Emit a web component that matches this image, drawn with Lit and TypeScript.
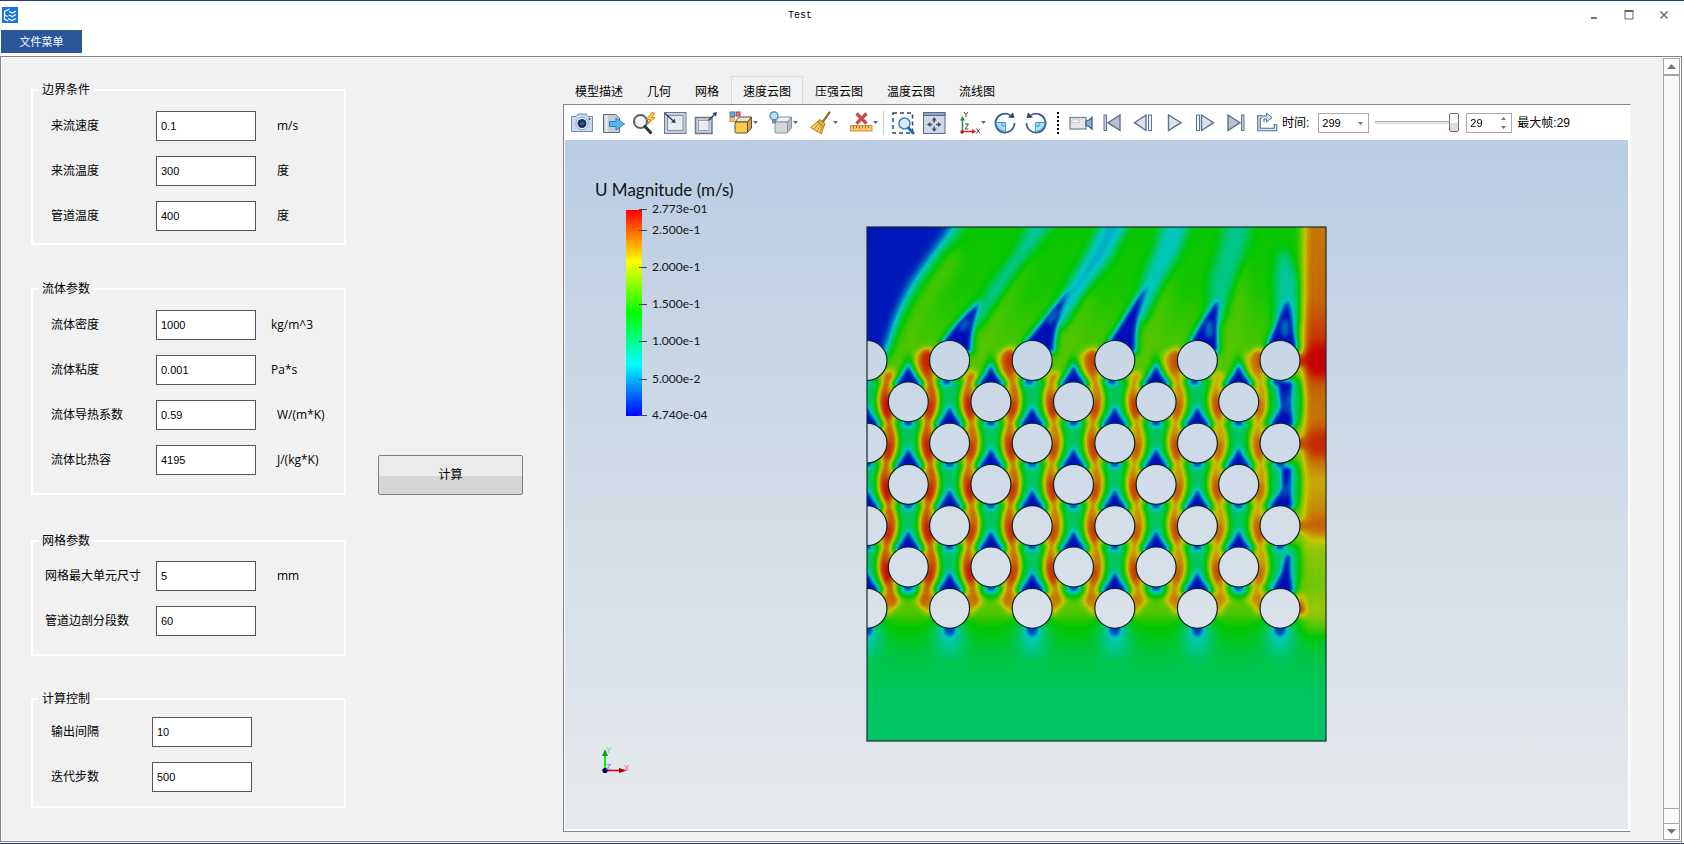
import { LitElement, html, css, svg, nothing } from "lit";
import { customElement, property } from "lit/decorators.js";

/* ---------- toolbar glyphs, all on a 24 x 24 grid ---------- */
const NAVY = "#24406e";
const STEEL = "#5a7396";
const PALE = "#dde1e8";

const cube = (front: string, top: string, side: string, line: string) => svg`
  <path d="M6 11 L10 6 H22.500 L18.500 11 Z" fill=${top} stroke=${line} />
  <path d="M18.500 11 L22.500 6 V17 L18.500 21.500 Z" fill=${side} stroke=${line} />
  <rect x="6" y="11" width="12.500" height="11" rx="1" fill=${front} stroke=${line} />`;

const ICONS: Record<string, unknown> = {
  camera: svg`
    <path d="M1.500 5.500 H6 L8 3 H16 L18 5.500 H22.500 V20.500 H1.500 Z" fill="#c9d8ec" stroke="#6b8cb8" stroke-linejoin="round"/>
    <circle cx="12" cy="12.500" r="6.200" fill="#eef3fa" stroke="#8fa9cb"/>
    <circle cx="12" cy="12.500" r="4.500" fill="#17335f"/><circle cx="12" cy="12.500" r="2" fill="#34588f"/>
    <circle cx="19.500" cy="8" r="1" fill="#34588f"/>`,
  export: svg`
    <path d="M2.500 3.500 H14.500 L18.500 7 V21.500 H2.500 Z" fill="#c7ccd4" stroke="#5f6b7b"/>
    <path d="M5.500 4 V21" stroke="#eef0f4" stroke-width="2"/>
    <path d="M8.500 10.500 H15 V7 L23.500 13 L15 19 V15.500 H8.500 Z" fill="#55b6ea" stroke="#2b84c0"/>`,
  inspect: svg`
    <circle cx="8.500" cy="10.500" r="6.500" fill="#f3f5f8" stroke="#5c6066" stroke-width="2"/>
    <path d="M13 15.500 L18.500 21.500" stroke="#33363b" stroke-width="3.200" stroke-linecap="round"/>
    <path d="M20 1.500 L14.500 8.500 H18 L15.500 13.500 L23 6.500 H19.500 L22.500 2 Z" fill="#ffd24a" stroke="#e57b1e"/>`,
  shrink: svg`
    <rect x="1.500" y="1.500" width="21.500" height="21" fill="#c9cfd9" stroke="#6a7a92"/>
    <rect x="4.500" y="4.500" width="15.500" height="15" fill="#e9ebee" stroke="#8492a8"/>
    <path d="M2 2.500 L11 10.500" stroke=${NAVY} stroke-width="1.500"/><path d="M12.500 12 L8 11.500 L12 7.500 Z" fill=${NAVY}/>`,
  grow: svg`
    <rect x="1.500" y="6.500" width="16.500" height="16" fill="#c9cfd9" stroke="#6a7a92" stroke-width="1.500"/>
    <rect x="4.500" y="9.500" width="10.500" height="10" fill="#e9ebee" stroke="#97a2b3"/>
    <path d="M14.500 9.500 L21 3" stroke=${NAVY} stroke-width="1.500"/><path d="M23 1 L18.500 2 L22 5.500 Z" fill=${NAVY}/>`,
  colorcube: svg`
    ${cube("#ffc94e", "#f0e6d0", "#d6a13a", "#5b5140")}
    <rect x="1" y="1" width="4.500" height="4.500" fill="#5fb7e6" stroke="#2b84c0"/>
    <rect x="7" y="1" width="4" height="4" fill="#e07a74" stroke="#b8413a"/>
    <rect x="1" y="6.500" width="4" height="4" fill="#ffc267" stroke="#dc8b22"/>`,
  lightcube: svg`
    ${cube("#d3d7dc", "#eceef0", "#b3bac3", "#8a929e")}
    <circle cx="5" cy="4.800" r="4" fill="#bfe2f7" stroke="#3f8fc8" stroke-width="1.300"/>
    <path d="M3.500 9 H6.500 V12 H3.500 Z" fill="#8fa0b4" stroke="#5b7596" stroke-width=".8"/>`,
  broom: svg`
    <path d="M20.500 1.500 L14 10.500" stroke="#9a6a35" stroke-width="2.200" stroke-linecap="round"/>
    <path d="M11 8.500 L16 12.500 L14.500 16 L8 11 Z" fill="#e9a93c" stroke="#a8701f"/>
    <path d="M8 11 L14.500 16 L12.500 23 L1.500 16.500 Z" fill="#ffd260" stroke="#b27d25" stroke-linejoin="round"/>
    <path d="M9.500 13 L5 18 M11.500 14.500 L8 20 M13 16 L11 21.500" stroke="#b27d25"/>`,
  ruler: svg`
    <path d="M7.500 2.500 L17.500 12.500 M17.500 2.500 L7.500 12.500" stroke="#c44b4b" stroke-width="3.200"/>
    <rect x="1.500" y="14.500" width="21.500" height="5.500" fill="#fbc768" stroke="#d1913a"/>
    <path d="M4.500 15 V17.500 M7.500 15 V17 M10.500 15 V17.500 M13.500 15 V17 M16.500 15 V17.500 M19.500 15 V17" stroke="#a06a22"/>`,
  zoombox: svg`
    <rect x="2" y="2" width="19.500" height="20" fill="none" stroke="#2c4674" stroke-width="1.500" stroke-dasharray="4 3"/>
    <circle cx="13.500" cy="12.500" r="5.500" fill="#d8effb" stroke="#3a86b8" stroke-width="1.500"/>
    <path d="M17.500 17 L22 22" stroke="#1f6fb0" stroke-width="3" stroke-linecap="round"/>`,
  fit: svg`
    <rect x="1.500" y="1.500" width="21.500" height="21" fill="#d3d9e4" stroke="#54688c"/>
    <rect x="1.500" y="1.500" width="21.500" height="3" fill="#8fa3c4" stroke="#54688c"/>
    <path d="M12.200 6 L14.700 9.500 H9.700 Z M12.200 21 L14.700 17.500 H9.700 Z M5 13.500 L8.500 11 V16 Z M19.500 13.500 L16 11 V16 Z" fill="#3b4c6c"/>
    <path d="M12.200 9 V11.500 M12.200 15.500 V18 M8 13.500 H10.300 M14.100 13.500 H16.500" stroke="#3b4c6c" stroke-width="1.500"/>`,
  axes: svg`
    <path d="M5.500 21 V8" stroke="#2e8b3d" stroke-width="1.500"/><path d="M5.500 5 L3 9.500 H8 Z" fill="#2e8b3d"/>
    <path d="M5 20.500 H16" stroke="#e02020" stroke-width="1.500"/><path d="M19 20.500 L15 18 V23 Z" fill="#e02020"/>
    <rect x="3.500" y="19.500" width="3" height="3" fill="#a01818"/>
    <path d="M7 1 L9 3.500 V6 M11 1 L9 3.500 M8 13 H11.500 L8 18 H11.500 M19.500 17.500 L23 22.500 M23 17.500 L19.500 22.500" fill="none" stroke="#444"/>`,
  rotcw: svg`
    <path d="M21.500 12 A9.500 9.500 0 1 1 17 4" fill="none" stroke="#3e5c8c" stroke-width="1.800"/>
    <path d="M21.500 7 L15 6.500 L20 1.500 Z" fill=${NAVY}/>
    <path d="M3 11.500 H12.500 V20.500 A9.500 9.500 0 0 1 3 11.500 Z" fill="#a9def8" stroke="#3a9fd8"/><path d="M9 11.500 V15 H12.500" fill="none" stroke="#3a9fd8"/>`,
  rotccw: svg`
    <path d="M2.500 12 A9.500 9.500 0 1 0 7 4" fill="none" stroke="#3e5c8c" stroke-width="1.800"/>
    <path d="M2.500 7 L9 6.500 L4 1.500 Z" fill=${NAVY}/>
    <path d="M21 11.500 H11.500 V20.500 A9.500 9.500 0 0 0 21 11.500 Z" fill="#a9def8" stroke="#3a9fd8"/><path d="M15 11.500 V15 H11.500" fill="none" stroke="#3a9fd8"/>`,
  record: svg`
    <rect x="1" y="6.500" width="16" height="11.500" fill="#e6e6e8" stroke="#7b8496" stroke-width="1.300"/>
    <rect x="3" y="9" width="7" height="2.500" fill="#fff" stroke="#a9afba" stroke-width=".6"/>
    <path d="M17 10 L20 9 L23 6.500 V18 L20 15.500 L17 14.500 Z" fill="#7fb8dc" stroke="#3f5f8d" stroke-width="1.300"/>`,
  first: svg`
    <rect x="4" y="4" width="2.500" height="15.500" fill="#c9d0db" stroke=${STEEL}/>
    <path d="M20 4 V19.500 L8 11.700 Z" fill="#b9c0cb" stroke=${STEEL} stroke-width="1.400"/>`,
  prev: svg`
    <rect x="17.500" y="4" width="3" height="15.500" fill="#eef1f6" stroke=${STEEL}/>
    <path d="M15 4 V19.500 L3.500 11.700 Z" fill=${PALE} stroke=${STEEL} stroke-width="1.400"/>`,
  play: svg`<path d="M6.500 4 V19.500 L19 11.700 Z" fill=${PALE} stroke=${STEEL} stroke-width="1.400"/>`,
  next: svg`
    <rect x="3.500" y="4" width="3" height="15.500" fill="#eef1f6" stroke=${STEEL}/>
    <path d="M8.500 4 V19.500 L20.500 11.700 Z" fill=${PALE} stroke=${STEEL} stroke-width="1.400"/>`,
  last: svg`
    <path d="M4 4 V19.500 L16 11.700 Z" fill="#b9c0cb" stroke=${STEEL} stroke-width="1.400"/>
    <rect x="17.500" y="4" width="2.500" height="15.500" fill="#c9d0db" stroke=${STEEL}/>`,
  loop: svg`
    <path d="M7 6 H4 V18.500 H20.500 V13" fill="none" stroke="#4d7099" stroke-width="3.600"/>
    <path d="M7 6 H4 V18.500 H20.500 V13.500" fill="none" stroke="#dbe7f3" stroke-width="1.400"/>
    <path d="M6 5 H11.500 V2 L17 6.500 L11.500 11 V8 H9 V11" fill="#cfe0f0" stroke="#4d7099"/>`,
};

@customElement("tool-button")
class ToolButton extends LitElement {
  @property() icon = "";
  @property() label = "";
  @property({ type: Boolean }) menu = false;

  static styles = css`
    :host { display: block; flex: none; }
    button {
      display: flex; align-items: center; justify-content: center;
      width: 31px; height: 32px; padding: 0; border: 0; background: none;
    }
    button.menu { width: 40px; justify-content: flex-end; padding-right: 3px; }
    svg { display: block; flex: none; }
  `;

  render() {
    return html`<button class=${this.menu ? "menu" : ""} aria-label=${this.label}>
      <svg width="24" height="24" viewBox="0 0 24 24" fill="none">${ICONS[this.icon]}</svg>
      ${this.menu ? html`<svg width="5" height="3" viewBox="0 0 5 3"><path d="M0 0H5L2.500 3Z" fill="#666" /></svg>` : nothing}
    </button>`;
  }
}

/* ---------- velocity field ---------- */
const PITCH = 82.6;
const HALF = 41.3;
const ROW0 = 133.5;
const R = 20;

/* scalar 0..1 as a grey level; the #jet filter turns it into a colour */
const lvl = (v: number) => {
  const n = Math.round(v * 255);
  return `rgb(${n},${n},${n})`;
};

interface Tube { x: number; y: number; row: number; col: number; }
const TUBES: Tube[] = [];
for (let row = 0; row < 7; row++) {
  const odd = row % 2 === 1;
  for (let col = 0; col < (odd ? 5 : 6); col++) {
    TUBES.push({ x: col * PITCH + (odd ? HALF : 0), y: ROW0 + row * HALF, row, col });
  }
}

const streamPath = (cx: number, side: number, from: number) => {
  const pts: string[] = [];
  for (let y = from; y <= 378; y += 3) {
    const x = cx + side * (20.65 + 5.5 * Math.cos((Math.PI * (y - ROW0)) / HALF));
    pts.push(`${x.toFixed(1)} ${y}`);
  }
  return "M" + pts.join(" L");
};

const STREAMS = [0, 1, 2, 3, 4].flatMap((k) => [
  { k, d: streamPath(k * PITCH, 1, 148) },
  { k, d: streamPath((k + 1) * PITCH, -1, 127) },
]);

/* wakes behind the top row, and the slow plumes that trail from them */
const WAKES = [
  { d: "M74 118 L104 126 C103 108 107 88 115 72 C102 84 88 98 74 118 Z", p: "M106 96 L122 60 L148 24 L170 -16 L196 -16 L160 30 L132 70 L112 100 Z", v: 0.3 },
  { d: "M156 118 L187 126 C186 104 194 78 206 58 C190 76 176 96 156 118 Z", p: "M188 96 L204 52 L226 14 L240 -16 L268 -16 L240 36 L214 70 L196 100 Z", v: 0.22 },
  { d: "M240 118 L269 126 C266 104 272 78 282 56 C266 76 256 96 240 118 Z", p: "M268 90 L278 46 L292 10 L300 -16 L328 -16 L310 30 L290 66 L276 96 Z", v: 0.26 },
  { d: "M322 118 L351 126 C349 104 350 88 352 72 C340 86 334 98 322 118 Z", p: "M342 90 L342 54 L354 16 L360 -16 L388 -16 L378 24 L364 64 L354 96 Z", v: 0.33 },
  { d: "M400 118 L430 124 C427 106 424 88 421 72 C414 86 410 98 400 118 Z", p: "M408 96 L408 50 L412 24 L420 24 L432 54 L432 100 Z", v: 0.3 },
];

const field = () => svg`
  <defs>
    <filter id="jet" x="0" y="0" width="1" height="1" color-interpolation-filters="sRGB">
      <feComponentTransfer>
        <feFuncR type="table" tableValues="0 0 0 0.780 0.780"/>
        <feFuncG type="table" tableValues="0 0.780 0.780 0.780 0"/>
        <feFuncB type="table" tableValues="0.720 0.780 0 0 0"/>
      </feComponentTransfer>
    </filter>
    ${[1, 2, 3, 5, 8].map(
      (s) => svg`<filter id="b${s}" filterUnits="userSpaceOnUse" x="-60" y="-60" width="580" height="640" color-interpolation-filters="sRGB"><feGaussianBlur stdDeviation=${s}/></filter>`
    )}
    <clipPath id="frame"><rect width="459" height="514"/></clipPath>
    <linearGradient id="base" gradientUnits="userSpaceOnUse" x1="0" y1="0" x2="0" y2="514">
      <stop offset="0" stop-color=${lvl(0.51)}/><stop offset=".13" stop-color=${lvl(0.53)}/>
      <stop offset=".21" stop-color=${lvl(0.58)}/><stop offset=".26" stop-color=${lvl(0.6)}/>
      <stop offset=".72" stop-color=${lvl(0.62)}/><stop offset=".75" stop-color=${lvl(0.6)}/>
      <stop offset=".78" stop-color=${lvl(0.5)}/><stop offset=".83" stop-color=${lvl(0.42)}/>
      <stop offset=".9" stop-color=${lvl(0.38)}/><stop offset="1" stop-color=${lvl(0.37)}/>
    </linearGradient>
    <linearGradient id="wall" gradientUnits="userSpaceOnUse" x1="0" y1="0" x2="0" y2="410">
      <stop offset="0" stop-color=${lvl(0.85)}/><stop offset=".18" stop-color=${lvl(0.87)}/>
      <stop offset=".32" stop-color=${lvl(0.97)}/><stop offset=".4" stop-color=${lvl(0.87)}/>
      <stop offset=".46" stop-color=${lvl(0.85)}/><stop offset=".53" stop-color=${lvl(0.92)}/>
      <stop offset=".62" stop-color=${lvl(0.78)}/><stop offset=".72" stop-color=${lvl(0.85)}/>
      <stop offset=".79" stop-color=${lvl(0.68)}/><stop offset=".87" stop-color=${lvl(0.64)}/>
      <stop offset=".94" stop-color=${lvl(0.7)}/><stop offset="1" stop-color=${lvl(0.52)}/>
    </linearGradient>
  </defs>
  <g clip-path="url(#frame)"><g filter="url(#jet)">
    <rect width="459" height="514" fill="url(#base)"/>
    <g filter="url(#b8)" fill="none">
      ${[0, 1, 2, 3, 4].map(
        (k) => svg`<path d="M${k * PITCH + 30} 140 C${k * PITCH + 34} 108 ${k * PITCH + 50} 80 ${k * PITCH + 88 - k * 14} 24" stroke=${lvl(0.61)} stroke-width="16"/>`
      )}
      <path d="M-40 -40 H110 L90 0 C72 26 54 48 46 62 C34 84 24 104 20 124 H-40 Z" fill=${lvl(0.12)}/>
      ${TUBES.filter((t) => t.row === 6).map((t) => svg`<ellipse cx=${t.x} cy="408" rx="14" ry="20" fill=${lvl(0.26)}/>`)}
    </g>
    <g filter="url(#b5)">${WAKES.map((w) => svg`<path d=${w.p} fill=${lvl(w.v)}/>`)}</g>
    <g filter="url(#b3)" fill="none">
      ${STREAMS.map((s) => svg`<path d=${s.d} stroke=${lvl(0.76)} stroke-width="19"/>`)}
    </g>
    <g filter="url(#b3)" fill="none" stroke-linecap="round">
      ${STREAMS.map((s) => svg`<path d=${s.d} stroke=${lvl(0.91 - s.k * 0.02)} stroke-width=${10 - s.k}/>`)}
    </g>
    <g filter="url(#b5)">
      <rect x="436" y="-30" width="60" height="438" fill="url(#wall)"/>
      <path d="M428 133 L446 118 H470 V150 H446 Z" fill=${lvl(1)}/>
      <path d="M428 216 L448 204 H470 V230 H448 Z" fill=${lvl(0.95)}/>
      <path d="M426 299 L446 290 H470 V308 H446 Z" fill=${lvl(0.88)}/>
    </g>
    <g filter="url(#b3)">
      ${TUBES.filter((t) => t.row < 6 && !(t.row === 0 && t.col === 0)).map((t) => {
        const hot = 1 - t.col * 0.02;
        return svg`
          <ellipse cx=${t.x - R - 1} cy=${t.y + (t.row ? 5 : 0)} rx="5" ry="13" fill=${lvl(hot)}/>
          ${t.row && t.x < 400 ? svg`<ellipse cx=${t.x + R + 1} cy=${t.y + 7} rx="5" ry="11" fill=${lvl(hot - 0.04)}/>` : nothing}`;
      })}
      ${TUBES.filter((t) => t.row === 6).map((t) => svg`
        <ellipse cx=${t.x - R - 1} cy=${t.y - 4} rx="4" ry="11" fill=${lvl(0.86)}/>
        <ellipse cx=${t.x + R + 1} cy=${t.y - 4} rx="4" ry="11" fill=${lvl(0.86)}/>`)}
      <ellipse cx="433" cy="134" rx="6" ry="5" fill=${lvl(0.98)}/>
      <ellipse cx="433" cy="217" rx="6" ry="5" fill=${lvl(0.94)}/>
      <ellipse cx="433" cy="299" rx="6" ry="5" fill=${lvl(0.9)}/>
      <ellipse cx="434" cy="383" rx="5" ry="6" fill=${lvl(0.94)}/>
    </g>
    <g filter="url(#b3)" fill=${lvl(0.38)}>
      ${TUBES.filter((t) => t.row > 1).map((t) => {
        const a = t.y - 64;
        const b = t.y - 17;
        const m = (a + b) / 2;
        return svg`<path d="M${t.x - 15} ${a} Q${t.x - 2} ${m} ${t.x - 19} ${b} H${t.x + 19} Q${t.x + 2} ${m} ${t.x + 15} ${a} Z"/>`;
      })}
      ${TUBES.filter((t) => t.row === 1).map((t) => svg`<path d="M${t.x} ${t.y - 50} Q${t.x - 4} ${t.y - 30} ${t.x - 19} ${t.y - 16} H${t.x + 19} Q${t.x + 4} ${t.y - 30} ${t.x} ${t.y - 50} Z"/>`)}
      ${TUBES.filter((t) => t.row === 5).map((t) => svg`<ellipse cx=${t.x} cy=${t.y + 22} rx="11" ry="9"/>`)}
      <path d="M402 152 H432 Q438 175 432 198 H402 Z M402 236 H431 Q436 256 431 280 H402 Z M404 318 H431 Q436 340 430 364 H402 Z"/>
    </g>
    <g filter="url(#b2)" fill=${lvl(0.02)}>
      ${TUBES.filter((t) => t.row > 0 && t.x < 400).map((t) => svg`<path d="M${t.x} ${t.y - 39} Q${t.x - 4} ${t.y - 26} ${t.x - 15} ${t.y - 16} H${t.x + 15} Q${t.x + 4} ${t.y - 26} ${t.x} ${t.y - 39} Z"/>`)}
      ${TUBES.map((t) => svg`<ellipse cx=${t.x - (t.row === 0 ? 3 : 0)} cy=${t.y + R + 1} rx="6" ry=${t.row === 6 ? 7 : 4} fill=${lvl(0.08)}/>`)}
    </g>
    <g filter="url(#b5)">
      <path d="M-30 -30 H94 L80 0 C62 26 46 48 38 62 C28 84 21 104 17 130 H-30 Z" fill=${lvl(0.03)}/>
    </g>
    <g filter="url(#b5)" fill=${lvl(0.16)}>${WAKES.map((w) => svg`<path d=${w.d}/>`)}</g>
    <g filter="url(#b2)" fill=${lvl(0.02)}>
      ${WAKES.map((w) => svg`<path d=${w.d}/>`)}
      <path d="M410 154 H426 L424 176 L427 200 H402 L414 180 Z M414 240 H425 L424 262 L426 282 H400 L415 262 Z M419 326 L424 328 L424 346 L427 366 H403 L414 346 Z"/>
    </g>
    <g filter="url(#b2)" fill=${lvl(0.14)}>
      <ellipse cx="98" cy="98" rx="3" ry="8" transform="rotate(38 98 98)"/>
      <ellipse cx="186" cy="90" rx="3" ry="9" transform="rotate(34 186 90)"/>
      <ellipse cx="342" cy="102" rx="4" ry="9"/><ellipse cx="418" cy="101" rx="4" ry="9"/>
      <ellipse cx="420" cy="176" rx="2" ry="12"/><ellipse cx="420" cy="262" rx="2" ry="10" transform="rotate(20 420 262)"/>
    </g>
  </g></g>
  <g clip-path="url(#frame)" fill="url(#sky)" stroke="#10202a" stroke-width="1.200">
    ${TUBES.map((t) => svg`<circle cx=${t.x} cy=${t.y} r=${R}/>`)}
  </g>
  <rect width="459" height="514" fill="none" stroke="#1d2b33" stroke-width="1.200"/>`;

const TICKS: [number, string][] = [
  [69, "2.773e-01"], [90, "2.500e-1"], [127, "2.000e-1"], [164, "1.500e-1"],
  [201, "1.000e-1"], [239, "5.000e-2"], [275, "4.740e-04"],
];

@customElement("field-view")
class FieldView extends LitElement {
  static styles = css`
    :host { display: block; min-height: 0; background: linear-gradient(#bacde4, #cfdbe7 48%, #e7eaed); }
    svg { display: block; width: 100%; height: 100%; }
    text { font-family: Lato, "Open Sans", sans-serif; fill: #101418; }
    .title { font-size: 17px; }
    .tick { font-size: 12px; }
    .axis { font-size: 8px; }
    .ax { fill: #ee6a6a; }
    .ay { fill: #5fd86f; }
    .az { fill: #6a6af0; }
  `;

  render() {
    return html`<svg viewBox="0 0 1063 689" preserveAspectRatio="xMidYMid meet" role="img" aria-label="U Magnitude">
      <defs>
        <linearGradient id="bar" x1="0" y1="0" x2="0" y2="1">
          <stop offset="0" stop-color="#f00" /><stop offset=".25" stop-color="#ff0" /><stop offset=".5" stop-color="#0f0" />
          <stop offset=".75" stop-color="#0ff" /><stop offset="1" stop-color="#00f" />
        </linearGradient>
        <linearGradient id="sky" gradientUnits="userSpaceOnUse" x1="0" y1="-87" x2="0" y2="602">
          <stop offset="0" stop-color="#bacde4" /><stop offset=".5" stop-color="#d0dce8" /><stop offset="1" stop-color="#e7eaed" />
        </linearGradient>
      </defs>
      <text class="title" x="30" y="56">U Magnitude (m/s)</text>
      <rect x="61" y="70" width="16" height="206" fill="url(#bar)" />
      ${TICKS.map(([y, t]) => svg`
        <path d="M74 ${y + 0.5} H82" stroke="#38424c"/>
        <text class="tick" x="87" y=${y + 4}>${t}</text>`)}
      <g transform="translate(302 87)">${field()}</g>
      <path d="M40 630 V616" stroke="#00f000" stroke-width="2" /><path d="M40 609 L37 616 H43 Z" fill="#0a9a1a" />
      <path d="M40 630.500 H54" stroke="#e00000" stroke-width="1.600" /><path d="M62 630.500 L54 628 V633 Z" fill="#b00000" />
      <circle cx="40" cy="630.500" r="2.600" fill="#00004a" />
      <text class="axis ay" x="41" y="613">Y</text>
      <text class="axis ax" x="59" y="631">X</text>
      <text class="axis az" x="41" y="630">Z</text>
    </svg>`;
  }
}

/* ---------- window ---------- */
interface Row { label: string; value: string; unit?: string; near?: boolean; }
interface Group { title: string; cls: string; rows: Row[]; }

const GROUPS: Group[] = [
  { title: "边界条件", cls: "boundary", rows: [
    { label: "来流速度", value: "0.1", unit: "m/s" },
    { label: "来流温度", value: "300", unit: "度" },
    { label: "管道温度", value: "400", unit: "度" } ] },
  { title: "流体参数", cls: "fluid", rows: [
    { label: "流体密度", value: "1000", unit: "kg/m^3", near: true },
    { label: "流体粘度", value: "0.001", unit: "Pa*s", near: true },
    { label: "流体导热系数", value: "0.59", unit: "W/(m*K)" },
    { label: "流体比热容", value: "4195", unit: "J/(kg*K)" } ] },
  { title: "网格参数", cls: "mesh", rows: [
    { label: "网格最大单元尺寸", value: "5", unit: "mm" },
    { label: "管道边剖分段数", value: "60" } ] },
  { title: "计算控制", cls: "control", rows: [
    { label: "输出间隔", value: "10" },
    { label: "迭代步数", value: "500" } ] },
];

const TABS = ["模型描述", "几何", "网格", "速度云图", "压强云图", "温度云图", "流线图"];

@customElement("app-root")
class AppRoot extends LitElement {
  static styles = css`
    * { box-sizing: border-box; }
    :host {
      display: flex; flex-direction: column; min-height: 100vh; box-sizing: border-box;
      border-top: 1px solid #1f3f77; border-bottom: 1px solid #1f3f77; background: #fff; color: #000;
      font: 12px/16px "Liberation Sans", "Noto Sans CJK SC", sans-serif;
    }
    button, input, select { font: inherit; color: inherit; margin: 0; }

    .titlebar { display: flex; align-items: center; height: 28px; padding: 0 8px 0 2px; }
    .logo { display: block; flex: none; }
    .caption { flex: 1; text-align: center; font: 10px/16px "Liberation Mono", monospace; padding-top: 2px; }
    .winbtns { display: flex; gap: 11px; }
    .winbtns button { display: grid; place-items: center; width: 24px; height: 24px; padding: 0; border: 0; background: none; }

    .menubar { display: flex; height: 26px; padding: 1px 1px 2px; }
    .menubar button { width: 81px; height: 23px; padding: 0; border: 0; background: #2b579a; color: #fff; font-size: 11px; }

    .main {
      flex: 1; display: flex; min-height: 0; margin: 1px 2px 1px 0;
      border: 1px solid #82838d; outline: 1px solid #fff; outline-offset: -2px; background: #f1f1f1;
    }
    form { display: flex; flex: none; padding: 25px 0 0 30px; }
    .groups { width: 315px; }
    fieldset { margin: 0; min-width: 0; border: 2px solid #fff; padding: 13px 0 18px 18px; display: block; }
    fieldset + fieldset { margin-top: 36px; }
    legend { margin-left: -13px; padding: 0 4px; line-height: 16px; }
    .boundary { padding-bottom: 12px; }
    fieldset.mesh { margin-top: 38px; padding-top: 12px; padding-left: 12px; }
    .mesh legend { margin-left: -7px; }
    fieldset.control { margin-top: 35px; padding-top: 10px; padding-bottom: 14px; }
    .row { display: grid; grid-template-columns: 105px 100px 1fr; align-items: center; height: 30px; }
    .row + .row { margin-top: 15px; }
    .mesh .row { grid-template-columns: 111px 100px 1fr; }
    .control .row { grid-template-columns: 101px 100px 1fr; }
    .row input { width: 100%; height: 30px; padding: 0 4px; border: 1px solid #565656; border-radius: 0; background: #fff; font-size: 11px; outline: none; }
    .unit { padding-left: 21px; font-family: "Open Sans", "Noto Sans CJK SC", sans-serif; }
    .unit.near { padding-left: 15px; }
    .run {
      width: 145px; height: 40px; margin: 373px 40px 0 32px; padding: 0; border: 1px solid #7d7d7d; border-radius: 2px;
      background: linear-gradient(#ebebeb 0 52%, #d5d5d5 52%);
    }

    .viewer { flex: 1; min-width: 0; display: flex; flex-direction: column; padding: 19px 31px 9px 0; }
    .tabs { display: flex; height: 28px; }
    .tabs button { padding: 2px 11px 0; border: 1px solid transparent; border-bottom: 0; background: none; white-space: nowrap; }
    .tabs button.on { border-color: #dadada; background: #f3f3f3; }
    .pane {
      flex: 1; display: flex; flex-direction: column; min-height: 0; background: #fff;
      border: 1px solid #82838d; border-right-color: #f8f8f8; padding: 0 2px 2px 1px;
    }
    .tools { display: flex; align-items: center; height: 35px; padding: 0 0 0 1px; }
    .sep { width: 1px; height: 24px; margin: 0 3px 0 2px; background: #ccc; }
    .grip { width: 2px; height: 22px; margin: 0 6px; background: repeating-linear-gradient(#000 0 2px, transparent 2px 4px); }
    .tools label { white-space: nowrap; }
    .box { position: relative; display: block; height: 20px; border: 1px solid #a9a9a9; background: #fff; }
    .box select, .box input {
      appearance: none; -moz-appearance: textfield; width: 100%; height: 18px; padding: 0 3px; border: 0; border-radius: 0;
      background: none; outline: none; font-size: 11px; line-height: 18px; display: block;
    }
    .box input::-webkit-inner-spin-button { appearance: none; display: none; }
    .box svg { position: absolute; right: 5px; top: 3px; pointer-events: none; }
    .time { width: 51px; margin-left: 9px; }
    .frame { width: 46px; }
    .range { appearance: none; width: 84px; height: 20px; margin: 0 7px 0 6px; background: none; }
    .range::-webkit-slider-runnable-track { height: 3px; background: linear-gradient(#b0b4b4 0 1px, #dfe4e4 1px); }
    .range::-webkit-slider-thumb {
      appearance: none; width: 10px; height: 19px; margin-top: -8px; border: 1px solid #6f6f6f; border-radius: 2px;
      background: linear-gradient(#fbfbfb 50%, #dcdcdc 50%);
    }
    .last { padding-left: 5px; white-space: nowrap; }
    field-view { flex: 1; }

    .scroll { display: flex; flex-direction: column; width: 17px; flex: none; margin: 1px; background: #fafafa; border: 1px solid #a3a3a3; }
    .scroll button { display: grid; place-items: center; width: 100%; height: 15px; padding: 0; border: 0; background: #fff; }
    .thumb { flex: 1; border-top: 2px solid #a3a3a3; border-bottom: 1px solid #a3a3a3; background: #f9f9f9; }
    .track { height: 15px; border-bottom: 1px solid #a3a3a3; }
  `;

  private group(g: Group, gi: number) {
    return html`<fieldset class=${g.cls}>
      <legend>${g.title}</legend>
      ${g.rows.map((r, i) => html`<div class="row">
        <label for="f${gi}-${i}">${r.label}</label>
        <input id="f${gi}-${i}" .value=${r.value} />
        ${r.unit ? html`<span class="unit ${r.near ? "near" : ""}">${r.unit}</span>` : nothing}
      </div>`)}
    </fieldset>`;
  }

  private tool(icon: string, label: string, menu = false) {
    return html`<tool-button icon=${icon} label=${label} ?menu=${menu}></tool-button>`;
  }

  render() {
    return html`
      <header class="titlebar">
        <svg class="logo" width="16" height="16" viewBox="0 0 16 16">
          <rect width="16" height="16" fill="#1673e6" />
          <path d="M7.500 2 L2.500 4.500 V12 L6 14 M2.500 8 L5.500 9.500 M7 4.500 L10.500 6 L14 4 M6.500 8 L10.500 9.500 L14 7.500 M6 11.500 L10 13.500 L14 11.500" fill="none" stroke="#fff" stroke-width="1.300" />
        </svg>
        <span class="caption">Test</span>
        <div class="winbtns">
          <button aria-label="最小化"><svg width="10" height="10"><path d="M2 8H8" stroke="#777" stroke-width="2" /></svg></button>
          <button aria-label="最大化"><svg width="10" height="10"><path d="M1 1.500H9V9H1Z" fill="none" stroke="#666" /><path d="M.500 1H9.500" stroke="#666" stroke-width="2" /></svg></button>
          <button aria-label="关闭"><svg width="10" height="10"><path d="M1.500 1.500L8.500 8.500M8.500 1.500L1.500 8.500" stroke="#666" stroke-width="1.400" /></svg></button>
        </div>
      </header>
      <nav class="menubar"><button>文件菜单</button></nav>
      <main class="main">
        <form @submit=${(e: Event) => e.preventDefault()}>
          <div class="groups">${GROUPS.map((g, i) => this.group(g, i))}</div>
          <button class="run">计算</button>
        </form>
        <section class="viewer">
          <div class="tabs" role="tablist">
            ${TABS.map((t, i) => html`<button role="tab" aria-selected=${i === 3} class=${i === 3 ? "on" : ""}>${t}</button>`)}
          </div>
          <div class="pane">
            <div class="tools">
              ${this.tool("camera", "截图")}${this.tool("export", "导出")}${this.tool("inspect", "检查")}
              ${this.tool("shrink", "缩小")}${this.tool("grow", "放大")}
              ${this.tool("colorcube", "颜色", true)}${this.tool("lightcube", "光照", true)}
              ${this.tool("broom", "清除", true)}${this.tool("ruler", "测量", true)}
              <span class="sep"></span>
              ${this.tool("zoombox", "框选缩放")}${this.tool("fit", "适应窗口")}${this.tool("axes", "视角", true)}
              ${this.tool("rotcw", "顺时针旋转")}${this.tool("rotccw", "逆时针旋转")}
              <span class="grip"></span>
              ${this.tool("record", "录制")}${this.tool("first", "第一帧")}${this.tool("prev", "上一帧")}${this.tool("play", "播放")}
              ${this.tool("next", "下一帧")}${this.tool("last", "最后一帧")}${this.tool("loop", "循环")}
              <label for="time">时间:</label>
              <span class="box time">
                <select id="time"><option selected>299</option></select>
                <svg width="5" height="12" viewBox="0 0 5 12"><path d="M0 5H5L2.500 8Z" fill="#777" /></svg>
              </span>
              <input class="range" type="range" min="0" max="29" .value=${"29"} aria-label="帧" />
              <span class="box frame">
                <input type="number" .value=${"29"} aria-label="当前帧" />
                <svg width="5" height="12" viewBox="0 0 5 12"><path d="M0 3H5L2.500 0ZM0 9H5L2.500 12Z" fill="#777" /></svg>
              </span>
              <span class="last">最大帧:29</span>
            </div>
            <field-view></field-view>
          </div>
        </section>
        <div class="scroll">
          <button aria-label="向上"><svg width="9" height="5"><path d="M0 5H9L4.500 0Z" fill="#777" /></svg></button>
          <div class="thumb"></div>
          <div class="track"></div>
          <button aria-label="向下"><svg width="9" height="5"><path d="M0 0H9L4.500 5Z" fill="#777" /></svg></button>
        </div>
      </main>`;
  }
}
